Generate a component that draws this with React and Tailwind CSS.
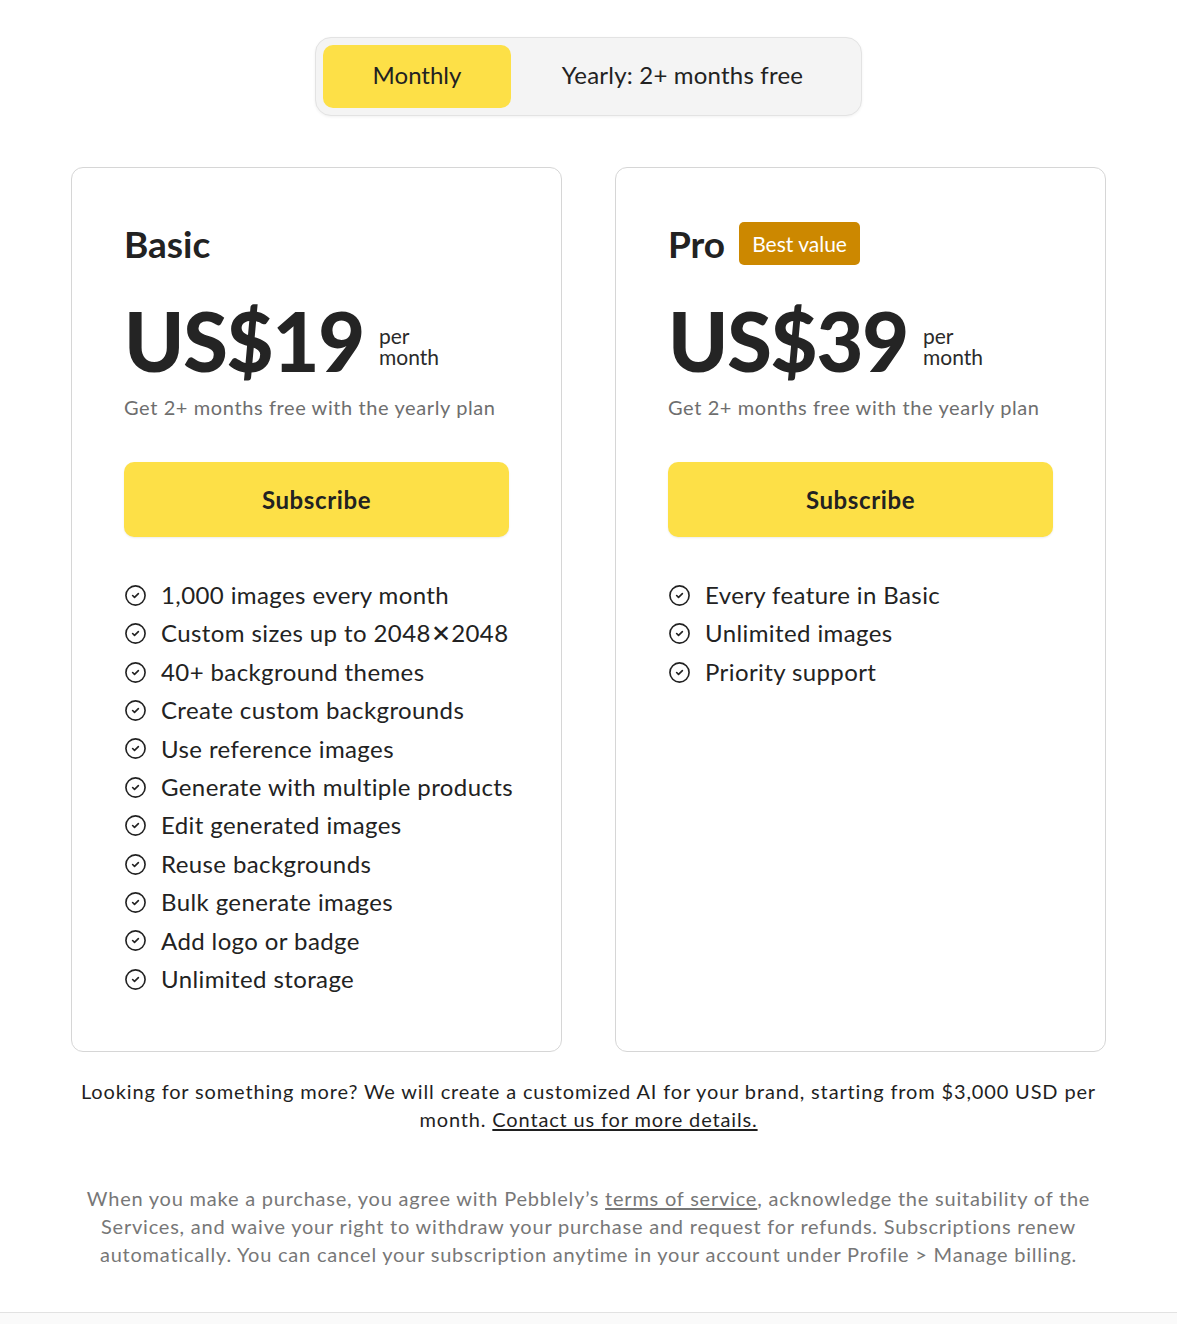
import { CircleCheck } from "lucide-react";

const basicFeatures = [
  "1,000 images every month",
  "Custom sizes up to 2048✕2048",
  "40+ background themes",
  "Create custom backgrounds",
  "Use reference images",
  "Generate with multiple products",
  "Edit generated images",
  "Reuse backgrounds",
  "Bulk generate images",
  "Add logo or badge",
  "Unlimited storage",
];

const proFeatures = ["Every feature in Basic", "Unlimited images", "Priority support"];

function PlanCard({ name, price, badge, features }) {
  return (
    <div className="rounded-[12px] border border-[#d6d6d6] bg-white px-[52px] pt-[53px] pb-[53px]">
      <div className="flex h-[44px] items-center gap-[14px]">
        <h2 className="text-[37px] font-bold leading-none text-[#222]">{name}</h2>
        {badge && (
          <span className="rounded-[5px] bg-[#cc8800] px-[13px] py-[7px] text-[21px] leading-[29px] text-white">
            {badge}
          </span>
        )}
      </div>
      <div className="mt-[40px] flex items-end gap-[15px]">
        <span className="text-[81px] font-black leading-[72px] tracking-[-1.2px] text-[#242424]">{price}</span>
        <span className="mb-[10px] text-[21px] leading-[21px] text-[#2a2a2a]">
          per
          <br />
          month
        </span>
      </div>
      <p className="mt-[16px] text-[20px] leading-[28px] tracking-[0.6px] text-[#6e6e6e]">
        Get 2+ months free with the yearly plan
      </p>
      <button className="mt-[41px] h-[75px] w-full rounded-[10px] bg-[#fde047] text-[24px] font-bold tracking-[0.6px] text-[#222] shadow-[0_1px_2px_rgba(0,0,0,0.08)]">
        Subscribe
      </button>
      <ul className="mt-[39px]">
        {features.map((f) => (
          <li
            key={f}
            className="flex items-center gap-[14px] whitespace-nowrap text-[24px] leading-[38.4px] tracking-[0.4px] text-[#222]"
          >
            <CircleCheck className="h-[23px] w-[23px] shrink-0" strokeWidth={1.7} />
            {f}
          </li>
        ))}
      </ul>
    </div>
  );
}

export default function App() {
  return (
    <div className="bg-white pr-[7px] font-['Lato','Inter',sans-serif] text-[#222]">
      <div className="mx-auto w-[1035px] pt-[37px]">
        {/* Billing toggle */}
        <div className="mx-auto flex w-[547px] rounded-[16px] border border-[#e3e3e3] bg-[#f4f4f4] p-[7px] shadow-[0_1px_3px_rgba(0,0,0,0.06)]">
          <button className="h-[63px] w-[188px] rounded-[10px] bg-[#fde047] pb-[4px] text-[24px] text-[#222]">Monthly</button>
          <button className="h-[63px] flex-1 pb-[4px] text-[24px] tracking-[0.2px] text-[#222]">Yearly: 2+ months free</button>
        </div>

        {/* Plans */}
        <div className="mt-[51px] grid grid-cols-2 gap-[53px]">
          <PlanCard name="Basic" price="US$19" features={basicFeatures} />
          <PlanCard name="Pro" price="US$39" badge="Best value" features={proFeatures} />
        </div>

        <p className="mt-[25px] text-center text-[20px] leading-[28px] tracking-[0.85px] text-[#1f1f1f]">
          Looking for something more? We will create a customized AI for your brand, starting from $3,000 USD per
          <br />
          month. <a href="#" className="underline underline-offset-2">Contact us for more details.</a>
        </p>

        <p className="mt-[51px] text-center text-[20px] leading-[28px] tracking-[0.78px] text-[#777]">
          When you make a purchase, you agree with Pebblely’s{" "}
          <a href="#" className="underline underline-offset-2">terms of service</a>, acknowledge the suitability of the
          <br />
          Services, and waive your right to withdraw your purchase and request for refunds. Subscriptions renew
          <br />
          automatically. You can cancel your subscription anytime in your account under Profile &gt; Manage billing.
        </p>
      </div>
      <div className="mt-[44px] h-[12px] border-t border-[#e2e2e2] bg-[#fafafa]" />
    </div>
  );
}
